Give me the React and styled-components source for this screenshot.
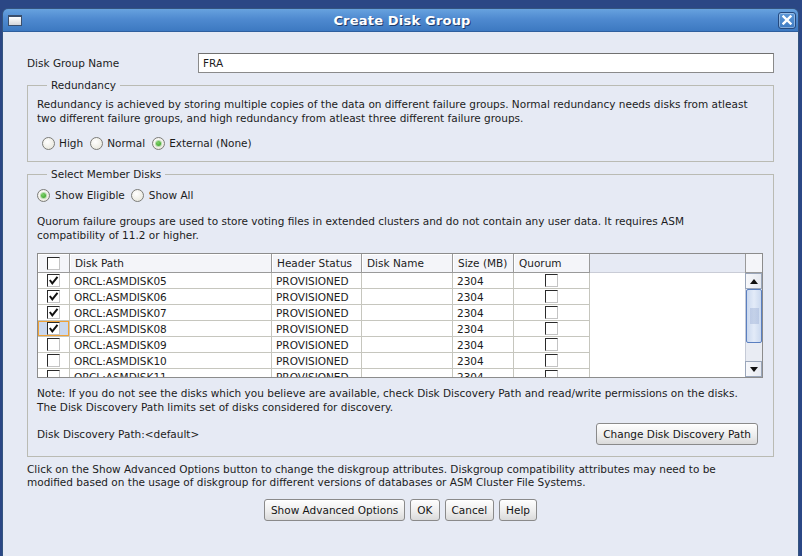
import React from 'react';
import styled, { createGlobalStyle } from 'styled-components';

const GlobalStyle = createGlobalStyle`
  html, body { margin: 0; padding: 0; }
  body {
    background: #2b4785;
    font-family: "DejaVu Sans", "Liberation Sans", sans-serif;
    font-size: 10.5px;
    color: #1c1c1c;
  }
  * { box-sizing: border-box; }
`;

const Desktop = styled.div`
  width: 802px;
  height: 556px;
  overflow: hidden;
  padding: 8px 3px 0 2px;
  background: #2b4785;
  display: flex;
`;

const Window = styled.div`
  flex: 1;
  display: flex;
  flex-direction: column;
  border: 1px solid #34547f;
  border-bottom: none;
  border-radius: 6px 6px 0 0;
  overflow: hidden;
`;

const TitleBar = styled.div`
  height: 23px;
  flex: none;
  display: grid;
  grid-template-columns: 1fr auto 1fr;
  align-items: center;
  padding: 0 2px 0 5px;
  background: linear-gradient(#67a2df, #4f8ad0 45%, #3d79c1);
  border-bottom: 1px solid #2f5f9e;
`;

const WinIcon = styled.span`
  width: 14px;
  height: 11px;
  border: 1px solid #3b4f6c;
  border-top-width: 2px;
  background: linear-gradient(#ffffff, #d4d6da);
`;

const Title = styled.div`
  color: #fff;
  font-weight: bold;
  font-size: 13px;
  letter-spacing: 0.2px;
  text-shadow: 1px 1px 0 #1f3c6a;
`;

const CloseBtn = styled.span`
  justify-self: end;
  width: 18px;
  height: 17px;
  border: 1px solid #24497e;
  border-radius: 3px;
  box-shadow: inset 0 0 0 1px rgba(255, 255, 255, 0.35);
  background: linear-gradient(#5d98d8, #3f7bc2);
  display: flex;
  align-items: center;
  justify-content: center;
`;

const Body = styled.div`
  flex: 1;
  background: #e6eaf4;
  padding: 21px 24px 0 24px;
  display: flex;
  flex-direction: column;
`;

const NameRow = styled.div`
  display: flex;
  align-items: center;
  height: 20px;
`;

const Label = styled.span`
  width: 171px;
  flex: none;
`;

const TextInput = styled.div`
  flex: 1;
  height: 20px;
  background: #fff;
  border: 1px solid #8a8a8a;
  border-top-color: #707070;
  padding-left: 4px;
  display: flex;
  align-items: center;
`;

const Group = styled.fieldset`
  margin: ${p => p.$mt}px 0 0 0;
  padding: ${p => p.$pt}px 10px ${p => p.$pb}px 9px;
  border: 1px solid #babbb3;
  min-width: 0;
`;

const Legend = styled.legend`
  margin-left: 10px;
  padding: 0 4px;
  line-height: 14px;
`;

const Para = styled.div`
  line-height: ${p => p.$lh || 13.5}px;
  white-space: nowrap;
  margin-top: ${p => p.$mt || 0}px;
  padding-left: ${p => p.$pl || 0}px;
`;

const RadioRow = styled.div`
  display: flex;
  align-items: center;
  height: 16px;
  margin-top: ${p => p.$mt || 0}px;
  padding-left: ${p => p.$pl || 0}px;
  gap: ${p => p.$gap}px;
`;

const RadioItem = styled.label`
  display: flex;
  align-items: center;
  gap: ${p => p.$gap || 4}px;
`;

const RadioCircle = styled.span`
  width: 13px;
  height: 13px;
  border-radius: 50%;
  border: 1px solid #7c7c78;
  background: radial-gradient(circle at 40% 35%, #ffffff, #ecebe2 70%, #dcdbd0);
  display: flex;
  align-items: center;
  justify-content: center;
  &::after {
    content: '';
    display: ${p => (p.$on ? 'block' : 'none')};
    width: 5px;
    height: 5px;
    border-radius: 50%;
    background: radial-gradient(circle at 40% 35%, #7fd26a, #2f9a1e);
    box-shadow: 0 0 0 1px #b8dcae;
  }
`;

const TableBox = styled.div`
  margin-top: 11px;
  height: 125px;
  border: 1px solid #8c8c8c;
  background: #fff;
  display: flex;
`;

const TableMain = styled.div`
  flex: 1;
  display: flex;
  flex-direction: column;
  overflow: hidden;
`;

const cols = '32px 202px 90px 91px 61px 76px 1fr';

const HeadRow = styled.div`
  display: grid;
  grid-template-columns: ${cols};
  height: 19px;
  flex: none;
  background: #e6eaf4;
`;

const HeadCell = styled.div`
  background: #f4f5f9;
  border-right: 1px solid #9a9a9a;
  border-bottom: 1px solid #9a9a9a;
  box-shadow: inset 1px 1px 0 #ffffff;
  display: flex;
  align-items: center;
  justify-content: ${p => (p.$center ? 'center' : 'flex-start')};
  padding-left: ${p => (p.$center ? 0 : 5)}px;
`;

const HeadFill = styled.div`
  background: #e6eaf4;
  border-bottom: 1px solid #c9ccd6;
`;

const Row = styled.div`
  display: grid;
  grid-template-columns: ${cols};
  height: 16px;
  flex: none;
`;

const Cell = styled.div`
  border-right: 1px solid #c6c6be;
  border-bottom: 1px solid #c6c6be;
  padding-left: ${p => (p.$center ? 0 : 4)}px;
  display: flex;
  align-items: center;
  justify-content: ${p => (p.$center ? 'center' : 'flex-start')};
  white-space: nowrap;
  overflow: hidden;
  background: ${p => (p.$focus ? '#cbd8ee' : '#fff')};
  box-shadow: ${p => (p.$focus ? 'inset 0 0 0 1px #f0a236' : 'none')};
`;

const BoxCheck = styled.span`
  width: 13px;
  height: 13px;
  background: #fff;
  border-top: 1px solid #2a2a2a;
  border-left: 1px solid #2a2a2a;
  border-right: 1px solid #c4c4c4;
  border-bottom: 1px solid #c4c4c4;
  display: flex;
  align-items: center;
  justify-content: center;
`;

const ScrollCol = styled.div`
  width: 17px;
  flex: none;
  display: flex;
  flex-direction: column;
`;

const Corner = styled.div`
  height: 19px;
  flex: none;
  background: #f4f5f9;
  border-left: 1px solid #9a9a9a;
  border-bottom: 1px solid #9a9a9a;
`;

const ArrowBtn = styled.div`
  height: 16px;
  flex: none;
  background: linear-gradient(90deg, #f7f8fb, #e6e9f0);
  border: 1px solid #9aa6ba;
  display: flex;
  align-items: center;
  justify-content: center;
`;

const Track = styled.div`
  flex: 1;
  background: #e9ecf3;
  border-left: 1px solid #c5cad6;
  display: flex;
  flex-direction: column;
`;

const Thumb = styled.div`
  height: 54px;
  background: linear-gradient(90deg, #cbd9ef, #e3ebf8 50%, #cbd9ef);
  border: 1px solid #5a7fc0;
  border-radius: 2px;
  display: flex;
  align-items: center;
  justify-content: center;
`;

const Grip = styled.span`
  width: 9px;
  height: 16px;
  background-image: radial-gradient(circle, #9fb2d6 0.6px, transparent 0.8px);
  background-size: 2px 2px;
`;

const PathRow = styled.div`
  margin-top: 9px;
  display: flex;
  align-items: center;
  justify-content: space-between;
  height: 22px;
  padding-right: 5px;
`;

const Button = styled.button`
  height: 22px;
  padding: 0 6px;
  margin: 0;
  border: 1px solid #8a8a8a;
  border-radius: 3px;
  background: linear-gradient(#fefefe, #eeeeee 55%, #dadada);
  font-family: inherit;
  font-size: 10.5px;
  color: #151515;
  box-shadow: inset 0 1px 0 #fff;
`;

const ButtonBar = styled.div`
  margin-top: 10px;
  display: flex;
  justify-content: center;
  gap: 5px;
`;

const Check = ({ on }) => (
  <BoxCheck>
    {on && (
      <svg width="11" height="11" viewBox="0 0 11 11">
        <polyline points="1.8,5 4.3,8.3 9.5,1.8" fill="none" stroke="#111" strokeWidth="2" />
      </svg>
    )}
  </BoxCheck>
);

const Radio = ({ on, children, gap }) => (
  <RadioItem $gap={gap}>
    <RadioCircle $on={on} />
    <span>{children}</span>
  </RadioItem>
);

const disks = [
  { n: '05', c: true },
  { n: '06', c: true },
  { n: '07', c: true },
  { n: '08', c: true, f: true },
  { n: '09', c: false },
  { n: '10', c: false },
  { n: '11', c: false },
];

export default function App() {
  return (
    <>
      <GlobalStyle />
      <Desktop>
        <Window>
          <TitleBar>
            <WinIcon />
            <Title>Create Disk Group</Title>
            <CloseBtn>
              <svg width="10" height="10" viewBox="0 0 10 10">
                <path d="M1.5 1.5 L8.5 8.5 M8.5 1.5 L1.5 8.5" stroke="#fff" strokeWidth="2.4" strokeLinecap="square" />
              </svg>
            </CloseBtn>
          </TitleBar>
          <Body>
            <NameRow>
              <Label>Disk Group Name</Label>
              <TextInput>FRA</TextInput>
            </NameRow>

            <Group $mt={5} $pt={5} $pb={10}>
              <Legend>Redundancy</Legend>
              <Para $lh={14}>
                Redundancy is achieved by storing multiple copies of the data on different failure groups. Normal redundancy needs disks from atleast
                <br />
                two different failure groups, and high redundancy from atleast three different failure groups.
              </Para>
              <RadioRow $mt={10} $pl={5} $gap={7}>
                <Radio>High</Radio>
                <Radio>Normal</Radio>
                <Radio on>External (None)</Radio>
              </RadioRow>
            </Group>

            <Group $mt={5} $pt={6} $pb={11}>
              <Legend>Select Member Disks</Legend>
              <RadioRow $gap={6}>
                <Radio on gap={5}>Show Eligible</Radio>
                <Radio gap={5}>Show All</Radio>
              </RadioRow>
              <Para $mt={12}>
                Quorum failure groups are used to store voting files in extended clusters and do not contain any user data. It requires ASM
                <br />
                compatibility of 11.2 or higher.
              </Para>
              <TableBox>
                <TableMain>
                  <HeadRow>
                    <HeadCell $center>
                      <Check />
                    </HeadCell>
                    <HeadCell>Disk Path</HeadCell>
                    <HeadCell>Header Status</HeadCell>
                    <HeadCell>Disk Name</HeadCell>
                    <HeadCell>Size (MB)</HeadCell>
                    <HeadCell>Quorum</HeadCell>
                    <HeadFill />
                  </HeadRow>
                  {disks.map(d => (
                    <Row key={d.n}>
                      <Cell $center $focus={d.f}>
                        <Check on={d.c} />
                      </Cell>
                      <Cell>ORCL:ASMDISK{d.n}</Cell>
                      <Cell>PROVISIONED</Cell>
                      <Cell />
                      <Cell>2304</Cell>
                      <Cell $center>
                        <Check />
                      </Cell>
                      <div />
                    </Row>
                  ))}
                </TableMain>
                <ScrollCol>
                  <Corner />
                  <ArrowBtn>
                    <svg width="8" height="5" viewBox="0 0 8 5">
                      <polygon points="0,5 8,5 4,0" fill="#111" />
                    </svg>
                  </ArrowBtn>
                  <Track>
                    <Thumb>
                      <Grip />
                    </Thumb>
                  </Track>
                  <ArrowBtn>
                    <svg width="8" height="5" viewBox="0 0 8 5">
                      <polygon points="0,0 8,0 4,5" fill="#111" />
                    </svg>
                  </ArrowBtn>
                </ScrollCol>
              </TableBox>
              <Para $mt={9}>
                Note: If you do not see the disks which you believe are available, check Disk Discovery Path and read/write permissions on the disks.
                <br />
                The Disk Discovery Path limits set of disks considered for discovery.
              </Para>
              <PathRow>
                <span>Disk Discovery Path:&lt;default&gt;</span>
                <Button>Change Disk Discovery Path</Button>
              </PathRow>
            </Group>

            <Para $mt={6} $lh={13}>
              Click on the Show Advanced Options button to change the diskgroup attributes. Diskgroup compatibility attributes may need to be
              <br />
              modified based on the usage of diskgroup for different versions of databases or ASM Cluster File Systems.
            </Para>
            <ButtonBar>
              <Button>Show Advanced Options</Button>
              <Button>OK</Button>
              <Button>Cancel</Button>
              <Button>Help</Button>
            </ButtonBar>
          </Body>
        </Window>
      </Desktop>
    </>
  );
}
